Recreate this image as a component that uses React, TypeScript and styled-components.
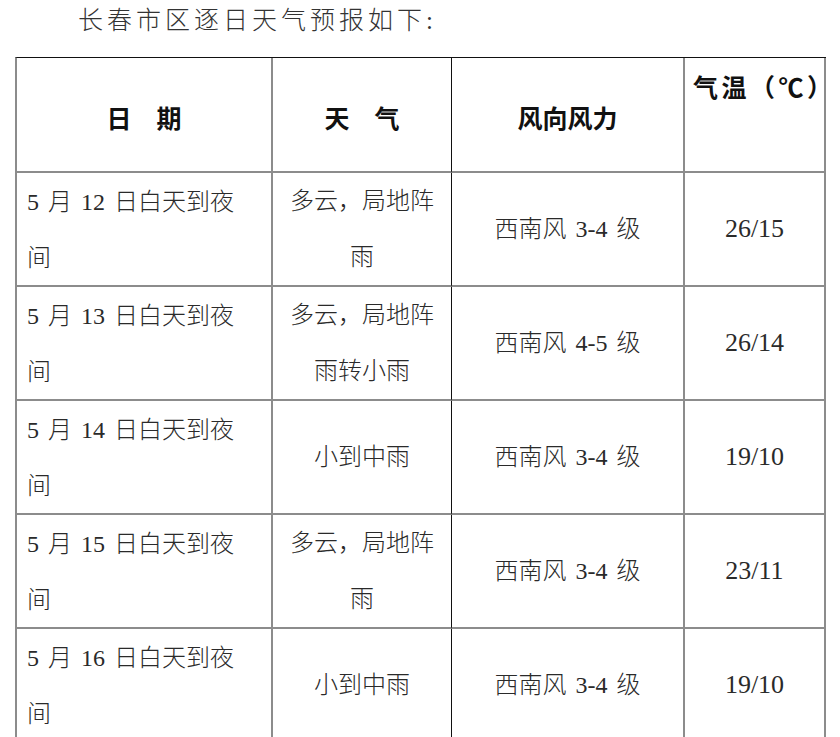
import React from "react";
import styled, { createGlobalStyle } from "styled-components";

const Global = createGlobalStyle`
  html, body { margin: 0; padding: 0; background: #ffffff; }
  body { font-family: "Liberation Serif", "Noto Sans CJK SC", serif; color: #222; }
`;

const Page = styled.div`
  width: 840px;
`;

const Title = styled.div`
  height: 42px;
  line-height: 42px;
  padding-left: 78px;
  margin-bottom: 15px;
  font-size: 25px;
  letter-spacing: 4px;
  color: #333;
  font-family: "Liberation Serif", "Noto Sans CJK SC", serif;
  font-weight: 300;
`;

const Table = styled.div`
  margin-left: 15px;
  width: 809px;
  display: grid;
  grid-template-columns: 256px 179px 233px 141px;
  grid-template-rows: 115px repeat(5, 114px);
  border-left: 2px solid #8c8c8c;
  border-top: 1px solid #111;
`;

const Cell = styled.div<{ $align?: "left" | "center"; $valign?: "top" | "center"; $dark?: boolean; $big?: boolean }>`
  box-sizing: border-box;
  border-bottom: 2px solid #8c8c8c;
  border-right: ${(p) => (p.$dark ? "1px solid #111" : "2px solid #8c8c8c")};
  display: flex;
  flex-direction: column;
  justify-content: ${(p) => (p.$valign === "top" ? "flex-start" : "center")};
  align-items: ${(p) => (p.$align === "left" ? "flex-start" : "center")};
  padding: ${(p) => (p.$align === "left" ? "1px 0 0 10px" : "0")};
  font-size: ${(p) => (p.$big ? "26px" : "24px")};
  line-height: 56px;
  word-spacing: 3px;
  font-weight: 300;
  color: #2a2a2a;
  white-space: nowrap;
`;

const HeadCell = styled.div<{ $dark?: boolean; $top?: boolean }>`
  box-sizing: border-box;
  border-bottom: 2px solid #8c8c8c;
  border-right: ${(p) => (p.$dark ? "1px solid #111" : "2px solid #8c8c8c")};
  display: flex;
  align-items: ${(p) => (p.$top ? "flex-start" : "center")};
  justify-content: ${(p) => (p.$top ? "flex-start" : "center")};
  padding: ${(p) => (p.$top ? "10px 0 0 8px" : "4px 0 0 0")};
  font-family: "Noto Sans CJK SC", sans-serif;
  font-size: 25px;
  font-weight: 700;
  letter-spacing: ${(p) => (p.$top ? "3.5px" : "0")};
  color: #111;
  white-space: nowrap;
  overflow: visible;
`;

const Line = styled.span`
  display: block;
  height: 56px;
`;

type Row = {
  date: string;
  weather: string[];
  wind: string;
  temp: string;
};

const rows: Row[] = [
  { date: "5 月 12 日白天到夜", weather: ["多云，局地阵", "雨"], wind: "西南风 3-4 级", temp: "26/15" },
  { date: "5 月 13 日白天到夜", weather: ["多云，局地阵", "雨转小雨"], wind: "西南风 4-5 级", temp: "26/14" },
  { date: "5 月 14 日白天到夜", weather: ["小到中雨"], wind: "西南风 3-4 级", temp: "19/10" },
  { date: "5 月 15 日白天到夜", weather: ["多云，局地阵", "雨"], wind: "西南风 3-4 级", temp: "23/11" },
  { date: "5 月 16 日白天到夜", weather: ["小到中雨"], wind: "西南风 3-4 级", temp: "19/10" },
];

export default function App() {
  return (
    <Page>
      <Global />
      <Title>长春市区逐日天气预报如下:</Title>
      <Table>
        <HeadCell>日　期</HeadCell>
        <HeadCell $dark>天　气</HeadCell>
        <HeadCell>风向风力</HeadCell>
        <HeadCell $top>气温（℃）</HeadCell>
        {rows.map((r) => (
          <React.Fragment key={r.date}>
            <Cell $align="left" $valign="top">
              <Line>{r.date}</Line>
              <Line>间</Line>
            </Cell>
            <Cell $dark>
              {r.weather.map((w) => (
                <Line key={w}>{w}</Line>
              ))}
            </Cell>
            <Cell>{r.wind}</Cell>
            <Cell $big>{r.temp}</Cell>
          </React.Fragment>
        ))}
      </Table>
    </Page>
  );
}
